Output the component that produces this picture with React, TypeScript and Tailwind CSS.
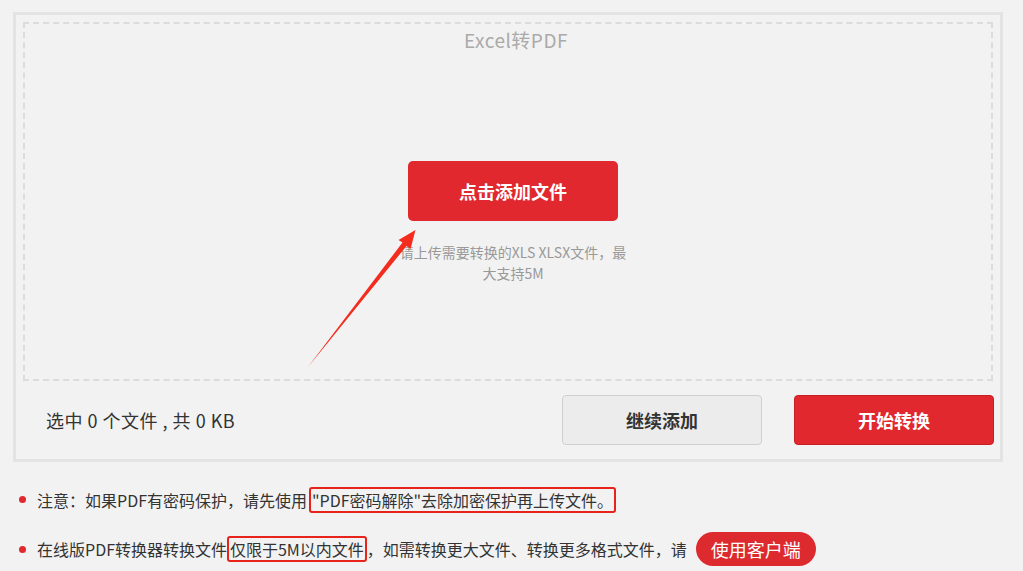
import React from "react";

const font = { fontFamily: '"Noto Sans CJK SC", "Noto Sans", sans-serif' };

export default function App() {
  return (
    <div className="relative w-[1023px] h-[571px] overflow-hidden bg-[#f2f2f2]" style={font}>
      <div className="ml-[13px] mt-[12px] w-[990px] border-[3px] border-[#e3e3e3] px-[7px] pt-[7px]">
        <div className="h-[359px] border-2 border-dashed border-[#dcdcdc] flex flex-col items-center pl-[10px]">
          <div className="mt-[3px] ml-[6px] text-[19px] leading-[26px] tracking-[0.5px] text-[#aaaaaa]">Excel转PDF</div>
          <button className="mt-[108px] w-[210px] h-[60px] rounded-[5px] bg-[#e0282e] text-white text-[18px] font-bold">
            点击添加文件
          </button>
          <div className="mt-[21px] text-[14px] leading-[21px] text-[#999999] text-center">
            请上传需要转换的XLS XLSX文件，最<br />大支持5M
          </div>
        </div>
        <div className="h-[78px] flex items-center">
          <div className="ml-[23px] text-[18px] tracking-[0.5px] text-[#333333]">选中 0 个文件 , 共 0 KB</div>
          <div className="ml-auto flex items-center gap-[32px] mr-[-1px]">
            <button className="w-[200px] h-[50px] rounded-[4px] border border-[#cfcfcf] bg-[#ececec] text-[18px] font-bold text-[#333333]">
              继续添加
            </button>
            <button className="w-[200px] h-[50px] rounded-[4px] border border-[#c81e24] bg-[#e0282e] text-[18px] font-bold text-white">
              开始转换
            </button>
          </div>
        </div>
      </div>

      <ul className="mt-[24px] ml-[19px] flex flex-col gap-[19px] text-[16px] text-[#333333]">
        <li className="flex items-center h-[27px]">
          <span className="w-[7px] h-[7px] rounded-full bg-[#e0282e] mr-[11px]" />
          <span>注意：如果PDF有密码保护，请先使用</span>
          <span className="ml-[2px] border-2 border-[#e8231c] rounded-[3px] px-[1px] leading-[22px]">
            "PDF密码解除"去除加密保护再上传文件。
          </span>
        </li>
        <li className="flex items-center h-[34px]">
          <span className="w-[7px] h-[7px] rounded-full bg-[#e0282e] mr-[11px]" />
          <span>在线版PDF转换器转换文件</span>
          <span className="border-2 border-[#e8231c] rounded-[3px] px-[1px] leading-[22px]">仅限于5M以内文件</span>
          <span>，如需转换更大文件、转换更多格式文件，请</span>
          <span className="ml-[9px] h-[34px] px-[15px] rounded-full bg-[#dc2a2f] text-white text-[18px] flex items-center">
            使用客户端
          </span>
        </li>
      </ul>

      <svg className="absolute left-0 top-0 pointer-events-none" width="1023" height="571">
        <polygon
          points="308,367 406.5,246 410.5,249 415.5,230 398.5,240 402.5,242.5"
          fill="#f42c1e"
        />
      </svg>
    </div>
  );
}
